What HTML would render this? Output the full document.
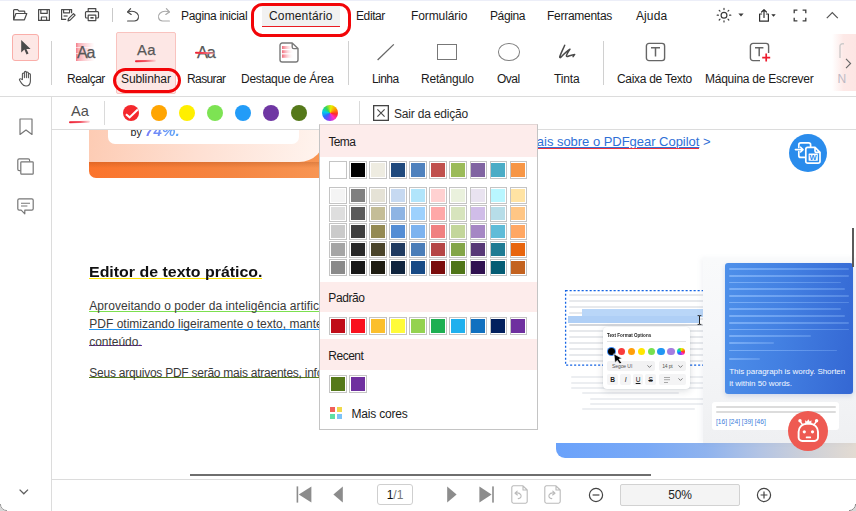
<!DOCTYPE html>
<html><head><meta charset="utf-8"><title>PDFgear</title>
<style>
*{box-sizing:border-box;margin:0;padding:0}
html,body{width:856px;height:511px;overflow:hidden;background:#fff}
body{font-family:"Liberation Sans",sans-serif;font-size:12px;color:#1b1b1b;position:relative}
.a{position:absolute}
.t{position:absolute;white-space:nowrap;line-height:14px;height:14px}
.m{top:9px}
.l{top:72px}
svg{position:absolute;overflow:visible}
.sw{position:absolute;border:1px solid #c4c4c4;background:#fff;padding:.8px}
.sw i{display:block;width:100%;height:100%}
.s2{height:16px}
.gl{position:absolute;height:2px;border-radius:1px;background:#e7e9ec}
.bl{position:absolute;height:1.7px;border-radius:1px;background:linear-gradient(90deg,rgba(150,195,255,.62),rgba(140,185,250,.34))}
.doc{position:absolute;white-space:nowrap;color:#3a3a3a;font-size:12px;line-height:14px}
</style></head><body>
<!-- ===== document area ===== -->
<div id="doc" class="a" style="left:52px;top:129px;width:804px;height:350px;overflow:hidden;background:#fff">
<div class="a" style="left:37.2px;top:-9.0px;width:260px;height:58px;border-radius:0 0 0 7px;background:linear-gradient(90deg,#fb742c 0%,#f58642 55%,#f99a58 100%)"></div>
<div class="a" style="left:37.2px;top:33.0px;width:260px;height:6px;background:linear-gradient(180deg,rgba(160,70,20,.28),rgba(160,70,20,0))"></div>
<div class="a" style="left:37.2px;top:-9.0px;width:236px;height:42.3px;border-radius:0 0 26px 0;background:linear-gradient(100deg,#fdcbb3 0%,#fee0d3 48%,#fff5f0 100%)"></div>
<div class="a" style="left:55.8px;top:-9.0px;width:191.5px;height:24.3px;border-radius:0 0 7px 7px;background:#fff"></div>
<span class="t" style="left:78.5px;top:-3px;font-size:10.6px;line-height:13px;color:#222">by</span>
<span class="t" style="left:93.0px;top:-6.6px;font-size:15.2px;line-height:18px;height:18px;font-weight:700;font-style:italic;background:linear-gradient(90deg,#7c7cf8,#5aa9f8);-webkit-background-clip:text;background-clip:text;color:transparent">74%.</span>
<span class="t" style="right:145.5px;top:4.7px;font-size:13px;line-height:15px;height:15px;color:#2f6fd6;letter-spacing:-.03px"><span style="text-decoration:underline;text-decoration-thickness:1px;text-underline-offset:1px">Saiba mais sobre o PDFgear Copilot</span> &gt;</span>
<div class="a" style="left:430px;top:18.7px;width:217.3px;height:1.3px;background:#ee2f3a"></div>
<svg style="left:737.0px;top:5.0px" width="38" height="38" viewBox="0 0 38 38"><circle cx="19" cy="19" r="19" fill="#2a8cec"/><g fill="none" stroke="#fff" stroke-width="1.7" stroke-linecap="round" stroke-linejoin="round"><path d="M9.8 13.4v-2.6a2 2 0 0 1 2-2h7.8a2 2 0 0 1 2 2v1.6M9.8 17.6v3.8a2 2 0 0 0 2 2h3.6"/><path d="M6.4 15.6h7.4M11.6 13.2l2.4 2.4-2.4 2.4" stroke-width="1.6"/><path d="M18.6 13.4h7.4l5 5v9a1.8 1.8 0 0 1-1.8 1.8H18.6a1.8 1.8 0 0 1-1.8-1.8V15.2a1.8 1.8 0 0 1 1.8-1.8zM26 13.6v3.4a1.4 1.4 0 0 0 1.4 1.4h3.4"/></g><rect x="19.6" y="19.4" width="9.2" height="7.4" rx=".6" fill="#fff"/><text x="24.2" y="25.9" font-family="Liberation Sans, sans-serif" font-size="7.6" font-weight="700" fill="#2a8cec" text-anchor="middle">W</text></svg>
<span class="t" style="left:37.3px;top:134.5px;font-size:14px;line-height:16px;height:15.4px;font-weight:700;color:#111;transform:scaleX(1.138);transform-origin:0 0;border-bottom:1.6px solid #ffe500">Editor de texto prático.</span>
<span class="doc" style="left:37.3px;top:170.2px;letter-spacing:0.065px;height:12.6px;border-bottom:1.4px solid #7ce04f">Aproveitando o poder da inteligência artificial, edite seus arquivos</span>
<span class="doc" style="left:37.3px;top:188.4px;letter-spacing:0px;height:12.7px;border-bottom:1.4px solid #2196f3">PDF otimizando ligeiramente o texto, mantendo o significado do</span>
<span class="doc" style="left:37.3px;top:205.7px;letter-spacing:-0.05px;height:11.5px;border-bottom:1.4px solid #7030a0">conteúdo.</span>
<span class="doc" style="left:37.3px;top:236.8px;letter-spacing:-0.25px;height:12.1px;border-bottom:1.4px solid #55791a">Seus arquivos PDF serão mais atraentes, informativos e profissionais.</span>
<div class="a" style="left:504.0px;top:307.0px;width:300px;height:22px;border-radius:0 0 0 9px;background:linear-gradient(90deg,#6aa2fb 0%,#79a9f6 30%,#8fb3ee 50%,#b3c4e4 68%,#cbcfd9 82%,#e3dbd2 100%)"></div>
<div class="a" style="left:504.0px;top:301.0px;width:150px;height:13px;background:#fff"></div>
<svg style="left:513.0px;top:161.0px" width="150" height="76" viewBox="0 0 150 76"><rect x=".6" y=".6" width="160" height="74.6" fill="none" stroke="#1363e4" stroke-width="1.3" stroke-dasharray="2.1 1.9"/></svg>
<div class="gl" style="left:517.0px;top:164.8px;width:136px;background:#e7e9ec"></div>
<div class="gl" style="left:517.0px;top:170.8px;width:136px;background:#e7e9ec"></div>
<div class="gl" style="left:517.0px;top:176.8px;width:136px;background:#e7e9ec"></div>
<div class="gl" style="left:517.0px;top:182.7px;width:136px;background:#e7e9ec"></div>
<div class="gl" style="left:517.0px;top:188.7px;width:136px;background:#e7e9ec"></div>
<div class="gl" style="left:517.0px;top:194.7px;width:136px;background:#d3d6db"></div>
<div class="gl" style="left:517.0px;top:200.7px;width:136px;background:#e7e9ec"></div>
<div class="gl" style="left:517.0px;top:206.7px;width:136px;background:#e7e9ec"></div>
<div class="gl" style="left:517.0px;top:212.6px;width:136px;background:#e7e9ec"></div>
<div class="gl" style="left:517.0px;top:218.6px;width:136px;background:#e7e9ec"></div>
<div class="gl" style="left:517.0px;top:224.6px;width:136px;background:#e7e9ec"></div>
<div class="gl" style="left:517.0px;top:230.6px;width:136px;background:#e7e9ec"></div>
<div class="a" style="left:530.0px;top:179.7px;width:122px;height:8px;background:#b9d6f8"></div>
<div class="a" style="left:516.0px;top:187.4px;width:131px;height:6.5px;background:#afcff6"></div>
<svg style="left:644.6px;top:186.0px" width="5" height="10" viewBox="0 0 5 10" fill="none" stroke="#222" stroke-width=".9"><path d="M.6.6h1.4a.5.5 0 0 1 .5.5v7.8a.5.5 0 0 1-.5.5H.6M4.4.6H3a.5.5 0 0 0-.5.5v7.8a.5.5 0 0 0 .5.5h1.4"/></svg>
<div class="gl" style="left:518.7px;top:247.1px;width:134.3px;background:#eceef1"></div>
<div class="gl" style="left:518.7px;top:252.6px;width:134.3px;background:#eceef1"></div>
<div class="gl" style="left:518.7px;top:257.9px;width:134.3px;background:#eceef1"></div>
<div class="gl" style="left:530.4px;top:263.2px;width:96.9px;background:#eceef1"></div>
<div class="gl" style="left:537.7px;top:268.6px;width:115.3px;background:#eceef1"></div>
<div class="gl" style="left:537.7px;top:273.8px;width:115.3px;background:#eceef1"></div>
<div class="gl" style="left:530.4px;top:279.2px;width:112.6px;background:#eceef1"></div>
<div class="a" style="left:551.2px;top:198.0px;width:86.8px;height:61.5px;border-radius:4px;background:#fff;box-shadow:0 2px 7px rgba(40,50,70,.16),0 0 1.5px rgba(40,50,70,.12)"><span class="t" style="left:4.1px;top:5.2px;font-size:5.3px;line-height:6px;height:6px;font-weight:700;color:#1c1c1c;transform:scaleX(.86);transform-origin:0 50%">Text Format Options</span><div class="a" style="left:4px;top:14px;width:79px;height:.7px;background:#e4e4e4"></div><div class="a" style="left:3.7px;top:19.9px;width:9px;height:9px;border-radius:50%;background:#3d8bf5"></div><div class="a" style="left:4.5px;top:20.8px;width:7.2px;height:7.2px;border-radius:50%;background:#000"></div><div class="a" style="left:14.6px;top:20.8px;width:7.2px;height:7.2px;border-radius:50%;background:#f93b3b"></div><div class="a" style="left:24.7px;top:20.8px;width:7.2px;height:7.2px;border-radius:50%;background:#ff9f0a"></div><div class="a" style="left:34.6px;top:20.8px;width:7.2px;height:7.2px;border-radius:50%;background:#ffe600"></div><div class="a" style="left:44.5px;top:20.8px;width:7.2px;height:7.2px;border-radius:50%;background:#76e04f"></div><div class="a" style="left:54.3px;top:20.8px;width:7.2px;height:7.2px;border-radius:50%;background:#2196f3"></div><div class="a" style="left:64.2px;top:20.8px;width:7.2px;height:7.2px;border-radius:50%;background:#a57de0"></div><div class="a" style="left:74.2px;top:20.8px;width:7.2px;height:7.2px;border-radius:50%;background:conic-gradient(from 100deg,#ff2a2a,#ff2dc8 12%,#8a3ff2 25%,#2a6cff 38%,#00cfe8 50%,#35d45a 62%,#e6f000 75%,#ff9500 88%,#ff2a2a)"></div><div class="a" style="left:4.1px;top:33.7px;width:47.4px;height:10.6px;border-radius:2px;background:#f2f2f3"></div><span class="t" style="left:8.8px;top:36px;font-size:5px;line-height:6px;height:6px;color:#555;letter-spacing:-.08px">Segoe UI</span><svg style="left:44px;top:37.6px" width="5" height="3" viewBox="0 0 5 3" fill="none" stroke="#555" stroke-width=".75"><path d="M.5.4l2 2 2-2"/></svg><div class="a" style="left:56px;top:33.7px;width:26.4px;height:10.6px;border-radius:2px;background:#f2f2f3"></div><span class="t" style="left:59px;top:36px;font-size:5px;line-height:6px;height:6px;color:#555;letter-spacing:-.15px">14 pt</span><svg style="left:75px;top:37.6px" width="5" height="3" viewBox="0 0 5 3" fill="none" stroke="#555" stroke-width=".75"><path d="M.5.4l2 2 2-2"/></svg><div class="a" style="left:4.1px;top:47.2px;width:10.6px;height:10.8px;border-radius:2px;background:#f4f4f5"></div><span class="t" style="left:4.1px;top:49.6px;width:10.6px;text-align:center;font-size:6.6px;line-height:7px;height:7px;margin-top:-.7px;color:#1a1a1a;font-weight:700">B</span><div class="a" style="left:17.3px;top:47.2px;width:10.6px;height:10.8px;border-radius:2px;background:#f4f4f5"></div><span class="t" style="left:17.3px;top:49.6px;width:10.6px;text-align:center;font-size:6.6px;line-height:7px;height:7px;margin-top:-.7px;color:#1a1a1a;font-style:italic">I</span><div class="a" style="left:29.6px;top:47.2px;width:10.6px;height:10.8px;border-radius:2px;background:#f4f4f5"></div><span class="t" style="left:29.6px;top:49.6px;width:10.6px;text-align:center;font-size:6.6px;line-height:7px;height:7px;margin-top:-.7px;color:#1a1a1a;text-decoration:underline">U</span><div class="a" style="left:42.1px;top:47.2px;width:10.6px;height:10.8px;border-radius:2px;background:#f4f4f5"></div><span class="t" style="left:42.1px;top:49.6px;width:10.6px;text-align:center;font-size:6.6px;line-height:7px;height:7px;margin-top:-.7px;color:#1a1a1a;text-decoration:line-through">S</span><div class="a" style="left:56px;top:47.2px;width:26.4px;height:10.8px;border-radius:2px;background:#f4f4f5"></div><div class="a" style="left:60.8px;top:50.3px;width:5.8px;height:.9px;background:#a8a8a8;box-shadow:0 2.2px 0 #a8a8a8"></div><div class="a" style="left:60.8px;top:54.7px;width:4.2px;height:.9px;background:#a8a8a8"></div><svg style="left:75px;top:51.2px" width="5" height="3" viewBox="0 0 5 3" fill="none" stroke="#555" stroke-width=".75"><path d="M.5.4l2 2 2-2"/></svg></div>
<svg style="left:561.0px;top:224.0px" width="11" height="12" viewBox="0 0 11 12"><path d="M.8.8l1.2 9 2.2-2.4 2.6 3.6 1.8-1.3-2.6-3.5 3.2-.6z" fill="#000" stroke="#fff" stroke-width=".7" stroke-linejoin="round"/></svg>
<div class="a" style="left:651.3px;top:129.2px;width:153px;height:184.6px;background:linear-gradient(180deg,#f9fafb 0%,#f6f7f9 40%,#eff0f2 100%);box-shadow:-2px 0 5px rgba(120,130,150,.09)"></div>
<div class="a" style="left:673.4px;top:134.2px;width:127.6px;height:130.6px;border-radius:3px;background:linear-gradient(97deg,#4e90ea 0%,#4380e2 45%,#3467d3 100%);box-shadow:0 2px 5px rgba(50,90,180,.18)"></div>
<div class="bl" style="left:677.3px;top:139.4px;width:119.3px"></div>
<div class="bl" style="left:677.3px;top:146.1px;width:119.3px"></div>
<div class="bl" style="left:677.3px;top:152.8px;width:111.5px"></div>
<div class="bl" style="left:677.3px;top:159.4px;width:115.7px"></div>
<div class="bl" style="left:677.3px;top:166.1px;width:119.3px"></div>
<div class="bl" style="left:677.3px;top:172.8px;width:119.3px"></div>
<div class="bl" style="left:677.3px;top:179.4px;width:111.5px"></div>
<div class="bl" style="left:677.3px;top:186.1px;width:115.7px"></div>
<div class="bl" style="left:677.3px;top:192.9px;width:119.3px"></div>
<div class="bl" style="left:677.3px;top:199.5px;width:119.3px"></div>
<div class="bl" style="left:677.3px;top:206.2px;width:81.7px"></div>
<div class="bl" style="left:677.3px;top:213.0px;width:45.1px"></div>
<div class="bl" style="left:677.3px;top:220.8px;width:107.7px"></div>
<div class="bl" style="left:677.3px;top:229.0px;width:30.7px"></div>
<span class="t" style="left:677.2px;top:237.3px;font-size:8px;line-height:11.9px;height:24px;color:#f4f8ff;white-space:pre;letter-spacing:-.04px">This paragraph is wordy. Shorten
it within 50 words.</span>
<div class="a" style="left:660.0px;top:273.0px;width:127.2px;height:28.2px;border-radius:3px;background:#fff"></div>
<div class="gl" style="left:664.0px;top:276.8px;width:120px;background:#dcdcdc"></div>
<div class="gl" style="left:664.0px;top:282.0px;width:120px;background:#dcdcdc"></div>
<span class="t" style="left:664.0px;top:288.6px;font-size:6.65px;line-height:8px;height:8px;color:#3b7ddb">[16] [24] [39] [46]</span>
<svg style="left:736.0px;top:282.2px" width="40" height="40" viewBox="0 0 40 40"><circle cx="20" cy="20" r="20" fill="#ee5a52"/><g fill="none" stroke="#fff" stroke-width="1.9" stroke-linecap="round" stroke-linejoin="round"><path d="M10.6 26.4v-5.6a8 8 0 0 1 8-8h3.4a8 8 0 0 1 8 8v5.6a3.6 3.6 0 0 1-3.6 3.6H14.2a3.6 3.6 0 0 1-3.6-3.6z"/><path d="M12.4 10.6l2.2 3.2M28.2 10.6L26 13.8" stroke-width="1.5"/></g><circle cx="12" cy="9.8" r="1.7" fill="#fff"/><circle cx="28.6" cy="9.8" r="1.7" fill="#fff"/><path d="M17.2 12.6V9.2l1.7 1.3 1.4-2.3 1.4 2.3 1.7-1.3v3.4z" fill="#fff"/><circle cx="16.3" cy="20.8" r="1.6" fill="#fff"/><circle cx="24.5" cy="20.8" r="1.6" fill="#fff"/><rect x="17.8" y="25.6" width="5.2" height="1.7" rx=".5" fill="#fff"/></svg>
<div class="a" style="left:799.8px;top:99.0px;width:2.6px;height:39px;background:#5a5a5a"></div>
<div class="a" style="left:138.0px;top:344.6px;width:461px;height:2.2px;background:#6e6e6e"></div>
</div>
<!-- ===== top menu ===== -->
<div id="menu" class="a" style="left:0;top:0;width:856px;height:32px;background:#fff">
<div class="a" style="left:0;top:0;width:856px;height:1px;background:#eceef8"></div>
<!-- folder -->
<svg style="left:12px;top:8px" width="16" height="14" viewBox="0 0 16 14" fill="none" stroke="#4a4a4a" stroke-width="1.2" stroke-linejoin="round"><path d="M1.6 11.6V2.4a.8.8 0 0 1 .8-.8h3.2l1.4 1.6h5a.8.8 0 0 1 .8.8v1.4"/><path d="M1.6 11.8l2.3-6.3h10.9l-2.4 6.3z"/></svg>
<!-- save -->
<svg style="left:37px;top:8px" width="14" height="14" viewBox="0 0 14 14" fill="none" stroke="#4a4a4a" stroke-width="1.2" stroke-linejoin="round"><path d="M1.6 1.6h10.8v10.8H1.6z"/><path d="M3.8 1.8v3.6h6.4V1.8"/><path d="M4.4 12.2V9h5.2v3.2"/></svg>
<!-- save as -->
<svg style="left:60px;top:8px" width="16" height="14" viewBox="0 0 16 14" fill="none" stroke="#4a4a4a" stroke-width="1.2" stroke-linejoin="round"><path d="M11.6 5.2V1.6H1.6v9.8h4.6"/><path d="M3.6 1.8v3h6V1.8"/><path d="M3.6 8h4"/><path d="M8 12.8l.5-2.2 5-5 1.6 1.6-5 5z"/></svg>
<!-- print -->
<svg style="left:84px;top:7px" width="16" height="15" viewBox="0 0 16 15" fill="none" stroke="#4a4a4a" stroke-width="1.2" stroke-linejoin="round"><path d="M4.2 4.6V1.6h7.6v3"/><path d="M4.2 11H2.4a.9.9 0 0 1-.9-.9V5.6a.9.9 0 0 1 .9-.9h11.2a.9.9 0 0 1 .9.9v4.5a.9.9 0 0 1-.9.9h-1.8"/><path d="M4.2 8.2h7.6v5.4H4.2z"/><path d="M6.4 10.8h3.2" stroke-width="1.6"/></svg>
<div class="a" style="left:112px;top:8px;width:1px;height:14px;background:#c9c9c9"></div>
<!-- undo -->
<svg style="left:126px;top:7px" width="15" height="16" viewBox="0 0 15 16" fill="none" stroke="#4a4a4a" stroke-width="1.2" stroke-linecap="round" stroke-linejoin="round"><path d="M4.6 1.6L1.6 5l3.6 2.4"/><path d="M1.8 5c3-1 6.6-1.2 9.2 1.2 2.8 2.8 1.6 7.6-2.6 7.8H1.6"/></svg>
<!-- redo -->
<svg style="left:156px;top:7px" width="15" height="16" viewBox="0 0 15 16" fill="none" stroke="#a9a9a9" stroke-width="1.2" stroke-linecap="round" stroke-linejoin="round"><g transform="translate(15 0) scale(-1 1)"><path d="M4.6 1.6L1.6 5l3.6 2.4"/><path d="M1.8 5c3-1 6.6-1.2 9.2 1.2 2.8 2.8 1.6 7.6-2.6 7.8H1.6"/></g></svg>
<span class="t m" style="left:181px;letter-spacing:-.32px">Pagina inicial</span>
<div class="a" style="left:262px;top:6px;width:78px;height:20.8px;background:#f1f1f1;border-bottom:1.8px solid #ea1c22"></div>
<span class="t m" style="left:269px;letter-spacing:.15px">Comentário</span>
<span class="t m" style="left:356px;letter-spacing:-.4px">Editar</span>
<span class="t m" style="left:411px;letter-spacing:-.1px">Formulário</span>
<span class="t m" style="left:490px;letter-spacing:-.4px">Página</span>
<span class="t m" style="left:547px;letter-spacing:-.27px">Ferramentas</span>
<span class="t m" style="left:636px;letter-spacing:.1px">Ajuda</span>
<!-- sun -->
<svg style="left:716px;top:7px" width="16" height="16" viewBox="0 0 16 16" fill="none" stroke="#3c3c3c" stroke-width="1.2" stroke-linecap="round"><circle cx="8" cy="8.2" r="2.9"/><path d="M8 1.4v1.2M8 13.8V15M1.2 8.2h1.2M13.6 8.2h1.2M3.2 3.4l.8.8M12 12.2l.8.8M12.8 3.4l-.8.8M4 12.2l-.8.8"/></svg>
<svg style="left:738px;top:13px" width="6" height="4" viewBox="0 0 6 4"><path d="M.4.4h5.2L3 3.4z" fill="#3c3c3c"/></svg>
<!-- share -->
<svg style="left:758px;top:8px" width="12" height="15" viewBox="0 0 12 15" fill="none" stroke="#2e2e2e" stroke-width="1.2" stroke-linecap="round" stroke-linejoin="round"><path d="M3.6 6H1.6v7.2h8.8V6H8.4"/><path d="M6 9.4V1.8M3.6 4L6 1.6 8.4 4"/></svg>
<svg style="left:771px;top:14px" width="5" height="3" viewBox="0 0 5 3"><path d="M.3.3h4.4L2.5 2.8z" fill="#2e2e2e"/></svg>
<!-- fullscreen -->
<svg style="left:793px;top:9px" width="14" height="13" viewBox="0 0 14 13" fill="none" stroke="#3c3c3c" stroke-width="1.3"><path d="M1.2 4.2V1.2h3.2M9.6 1.2h3.2v3M12.8 8.8v3H9.6M4.4 11.8H1.2v-3"/></svg>
<!-- chevron up -->
<svg style="left:826px;top:11px" width="13" height="8" viewBox="0 0 13 8" fill="none" stroke="#555" stroke-width="1.2"><path d="M.8 7.2L6.3 1.6l5.5 5.6"/></svg>
</div>
<!-- ===== toolbar ===== -->
<div id="tool" class="a" style="left:0;top:32px;width:856px;height:65px;background:#fff;border-bottom:1px solid #dcdcdc">
<!-- select -->
<div class="a" style="left:12px;top:2px;width:27px;height:27px;background:#fde7e5;border:1px solid #faaea9;border-radius:3px"></div>
<svg style="left:20px;top:7px" width="12" height="17" viewBox="0 0 12 17"><path d="M1.2 1v12.4l3.2-2.8 2.1 4.9 2-.9-2.1-4.7h4.2z" fill="#4a4a4a"/></svg>
<!-- hand -->
<svg style="left:18px;top:38px" width="16" height="17" viewBox="0 0 16 17" fill="none" stroke="#555" stroke-width="1.1" stroke-linecap="round" stroke-linejoin="round"><path d="M4.4 9.6V4a1 1 0 0 1 2 0v3.6V2.4a1 1 0 0 1 2 0v5.2V3a1 1 0 0 1 2 0v4.8V4.6a1 1 0 0 1 2 0v6.4c0 3-1.6 5-4.4 5-2.2 0-3.2-.8-4.4-2.6L1.6 10.2c-.6-1 .6-2 1.5-1.1z"/></svg>
<div class="a" style="left:51px;top:9px;width:1px;height:44px;background:#d0d0d0"></div>
<!-- realcar -->
<div class="a" style="left:76px;top:11px;width:20px;height:18px;background:linear-gradient(90deg,#f47c88 0%,rgba(247,150,160,.8) 12%,rgba(250,175,182,.6) 40%,rgba(255,255,255,0) 92%)"></div>
<div class="a" style="left:76px;top:15.2px;width:20px;height:1px;background:rgba(255,255,255,.6)"></div>
<div class="a" style="left:76px;top:20.6px;width:20px;height:1px;background:rgba(255,255,255,.6)"></div>
<span class="t" style="left:77px;top:11px;-webkit-text-stroke:.25px #575757;font-size:16px;line-height:20px;height:20px;color:#575757;letter-spacing:-1.1px">Aa</span>
<span class="t l2" style="left:67px;top:40px;letter-spacing:-.5px">Realçar</span>
<!-- sublinhar -->
<div class="a" style="left:116px;top:0;width:60px;height:62px;background:#fde7e5;border:1px solid #f9c3bf;border-radius:2px"></div>
<span class="t" style="left:137px;top:8px;-webkit-text-stroke:.25px #575757;font-size:14.8px;line-height:20px;height:20px;color:#575757;letter-spacing:.3px">Aa</span>
<div class="a" style="left:135px;top:28.2px;width:20.5px;height:1.9px;border-radius:1px;background:linear-gradient(90deg,#ee1c2e 0%,#f15a68 50%,rgba(250,180,185,.35) 100%);transform:rotate(-1.5deg)"></div>
<span class="t" style="left:121px;top:40px;letter-spacing:-.1px">Sublinhar</span>
<!-- rasurar -->
<span class="t" style="left:197px;top:10px;-webkit-text-stroke:.25px #575757;font-size:16.3px;line-height:20px;height:20px;color:#575757;letter-spacing:-1px">Aa</span>
<div class="a" style="left:195px;top:19.6px;width:20px;height:1.5px;border-radius:1px;background:linear-gradient(90deg,#ee1c2e 0%,#f2596a 55%,rgba(250,180,185,.5) 100%);transform:rotate(1.2deg)"></div>
<span class="t" style="left:187px;top:40px;letter-spacing:-.6px">Rasurar</span>
<!-- destaque -->
<svg style="left:279px;top:10px" width="20" height="21" viewBox="0 0 20 21"><defs><linearGradient id="gd" x1="0" x2="1"><stop offset="0" stop-color="#f26b7b"/><stop offset="1" stop-color="#fff" stop-opacity="0"/></linearGradient></defs><rect x="3" y="4" width="12" height="3" fill="url(#gd)"/><rect x="3" y="8.2" width="12" height="3" fill="url(#gd)"/><rect x="3" y="12.4" width="12" height="3.4" fill="url(#gd)"/><path d="M13.2 1H3.2A2.2 2.2 0 0 0 1 3.2v14.6A2.2 2.2 0 0 0 3.2 20h13.6a2.2 2.2 0 0 0 2.2-2.2V6.6zM13.2 1v4a1.6 1.6 0 0 0 1.6 1.6H19" fill="none" stroke="#7a7a7a" stroke-width="1.4" stroke-linejoin="round"/></svg>
<span class="t" style="left:241px;top:40px;letter-spacing:-.26px">Destaque de Área</span>
<div class="a" style="left:348px;top:9px;width:1px;height:44px;background:#d0d0d0"></div>
<!-- linha -->
<svg style="left:376px;top:11px" width="19" height="18" viewBox="0 0 19 18"><path d="M1.6 17L17.8 1.4" stroke="#666" stroke-width="1.3" fill="none"/></svg>
<span class="t" style="left:372px;top:40px;letter-spacing:-.55px">Linha</span>
<!-- retangulo -->
<div class="a" style="left:436.5px;top:11.5px;width:20px;height:16.5px;border:1.3px solid #777"></div>
<span class="t" style="left:421px;top:40px;letter-spacing:-.22px">Retângulo</span>
<!-- oval -->
<div class="a" style="left:498px;top:11px;width:21.5px;height:17.5px;border:1.3px solid #808080;border-radius:50%"></div>
<span class="t" style="left:497px;top:40px;letter-spacing:-.5px">Oval</span>
<!-- tinta -->
<svg style="left:558px;top:12px" width="18" height="15" viewBox="0 0 18 15" fill="none" stroke="#4a4a4a" stroke-width="1.5" stroke-linecap="round" stroke-linejoin="round"><path d="M6.7 1.2C5 5.2 2.5 10 1.7 13c0 .8.6.8 1.2.2C6 10 9 7 12 5.2 10.4 7.6 8.6 10.2 8.4 11.8c0 .9 1 .8 2 .4 2.6-1 4.6-1.8 6.3-1.8l-1.6 2.2"/></svg>
<span class="t" style="left:554px;top:40px;letter-spacing:-.15px">Tinta</span>
<div class="a" style="left:603px;top:9px;width:1px;height:44px;background:#d0d0d0"></div>
<!-- caixa de texto -->
<svg style="left:645px;top:10px" width="21" height="20" viewBox="0 0 21 20" fill="none" stroke="#666" stroke-width="1.4"><rect x="1.4" y="1.4" width="18.2" height="17.2" rx="2.6"/><path d="M6 5.8h9M10.5 5.8v8.8" stroke-width="1.5"/></svg>
<span class="t" style="left:617px;top:40px;letter-spacing:-.3px">Caixa de Texto</span>
<!-- maquina -->
<svg style="left:749px;top:10px" width="23" height="21" viewBox="0 0 23 21" fill="none" stroke="#666" stroke-width="1.4"><path d="M11 18.6H4a2.6 2.6 0 0 1-2.6-2.6V4A2.6 2.6 0 0 1 4 1.4h13A2.6 2.6 0 0 1 19.6 4v7"/><path d="M6 5.8h8.4M10.2 5.8v8.4" stroke-width="1.5"/><path d="M17.2 11.6v8M13.2 15.6h8" stroke="#ee1c2e" stroke-width="1.7"/></svg>
<span class="t" style="left:705px;top:40px;letter-spacing:-.26px">Máquina de Escrever</span>
<!-- overflow -->
<div class="a" style="left:832px;top:2px;width:24px;height:57px;background:linear-gradient(90deg,rgba(253,231,229,0) 0%,#fde9e7 48%,#fde6e4 100%)"></div>
<svg style="left:839px;top:10.5px" width="6" height="16" viewBox="0 0 6 16" fill="none" stroke="#cfcccc" stroke-width="1.5"><path d="M5 .8H3.4A2.4 2.4 0 0 0 1 3.2V15"/></svg>
<span class="t" style="left:837.5px;top:40px;color:#bdb9c4">N</span>
<svg style="left:845px;top:25.5px" width="7" height="11" viewBox="0 0 7 11" fill="none" stroke="#666" stroke-width="1.1"><path d="M1 .8l4.6 4.7L1 10.2"/></svg>
</div>
<!-- ===== sub toolbar ===== -->
<div id="sub" class="a" style="left:52px;top:97px;width:804px;height:33px;background:#fff;border-bottom:1px solid #dcdcdc">
<span class="t" style="left:19px;top:4px;font-size:14.6px;line-height:20px;height:20px;color:#4f4f4f;letter-spacing:.1px">Aa</span>
<div class="a" style="left:17px;top:24.3px;width:20.5px;height:1.7px;border-radius:1px;background:linear-gradient(90deg,#ee1c2e 0%,#f25a6a 55%,rgba(250,190,195,.5) 100%);transform:rotate(-2deg)"></div>
<div class="a" style="left:52px;top:4px;width:1px;height:24px;background:#dadada"></div>
<div class="a" style="left:71px;top:8px;width:16px;height:16px;border-radius:50%;background:#f4282d"></div>
<div class="a" style="left:99px;top:8px;width:16px;height:16px;border-radius:50%;background:#ffa502"></div>
<div class="a" style="left:127px;top:8px;width:16px;height:16px;border-radius:50%;background:#ffef00"></div>
<div class="a" style="left:155px;top:8px;width:16px;height:16px;border-radius:50%;background:#7de353"></div>
<div class="a" style="left:183px;top:8px;width:16px;height:16px;border-radius:50%;background:#229cf8"></div>
<div class="a" style="left:211px;top:8px;width:16px;height:16px;border-radius:50%;background:#6f37a3"></div>
<div class="a" style="left:239px;top:8px;width:16px;height:16px;border-radius:50%;background:#55791a"></div>
<svg style="left:73px;top:11px" width="14" height="11" viewBox="0 0 14 11" fill="none" stroke="#fff" stroke-width="2.1" stroke-linejoin="miter"><path d="M1 6.2l3.6 3.2 8.2-7.8"/></svg>
<div class="a" style="left:270px;top:8px;width:16px;height:16px;border-radius:50%;background:conic-gradient(from 100deg,#ff2a2a,#ff2dc8 12%,#8a3ff2 25%,#2a6cff 38%,#00cfe8 50%,#35d45a 62%,#e6f000 75%,#ff9500 88%,#ff2a2a)"></div>
<div class="a" style="left:307px;top:4px;width:1px;height:24px;background:#dadada"></div>
<svg style="left:321px;top:8px" width="16" height="16" viewBox="0 0 16 16" fill="none"><rect x=".65" y=".65" width="14.7" height="14.7" stroke="#444" stroke-width="1.3"/><path d="M4.4 4.4l7.2 7.2M11.6 4.4l-7.2 7.2" stroke="#4a4a4a" stroke-width="1.15"/></svg>
<span class="t" style="left:342px;top:10px;letter-spacing:-.2px;color:#2b2b2b">Sair da edição</span>
</div>
<!-- ===== sidebar ===== -->
<div id="side" class="a" style="left:0;top:97px;width:52px;height:414px;background:#fff;border-right:1px solid #dcdcdc">
<svg style="left:19px;top:21px" width="14" height="18" viewBox="0 0 14 18" fill="none" stroke="#777" stroke-width="1.2" stroke-linejoin="round"><path d="M1 1h12v15.4L7 12 1 16.4z"/></svg>
<svg style="left:17px;top:61px" width="17" height="17" viewBox="0 0 17 17" fill="none" stroke="#777" stroke-width="1.2"><path d="M3.6 12.6H2.2A1.4 1.4 0 0 1 .8 11.2V2.2A1.4 1.4 0 0 1 2.2.8h9a1.4 1.4 0 0 1 1.4 1.4v1.4"/><rect x="3.8" y="3.8" width="12.4" height="12.4" rx=".8"/></svg>
<svg style="left:17px;top:101px" width="17" height="17" viewBox="0 0 17 17" fill="none" stroke="#777" stroke-width="1.2" stroke-linejoin="round"><path d="M.8 2.2A1.4 1.4 0 0 1 2.2.8h12.6a1.4 1.4 0 0 1 1.4 1.4v8.6a1.4 1.4 0 0 1-1.4 1.4H7.8v3.6L4.2 12.2h-2A1.4 1.4 0 0 1 .8 10.8z"/><path d="M4 5.2h9M4 8h6.4" stroke-width="1.1"/></svg>
<svg style="left:19.2px;top:391.8px" width="10" height="6" viewBox="0 0 10 6" fill="none" stroke="#5e5e5e" stroke-width="1.3"><path d="M.6.6L4.8 4.8 9 .6"/></svg>
</div>
<!-- ===== bottom bar ===== -->
<div id="bot" class="a" style="left:52px;top:479px;width:804px;height:32px;background:#fff;box-shadow:inset 0 1px 0 #dcdcdc">
<svg style="left:244px;top:7px" width="16" height="17" viewBox="0 0 16 17"><rect x=".6" y=".4" width="1.6" height="16.2" fill="#8c8c8c"/><path d="M15.4.4v16.2L2.8 8.5z" fill="#8c8c8c"/></svg>
<svg style="left:281px;top:7px" width="10" height="17" viewBox="0 0 10 17"><path d="M9.8.4v16.2L.4 8.5z" fill="#8c8c8c"/></svg>
<div class="a" style="left:325px;top:5px;width:36px;height:21px;border:1px solid #cfcfcf;border-radius:3px;background:#fff"></div>
<span class="t" style="left:325px;top:9px;width:36px;text-align:center;color:#222"><b style="font-weight:400;color:#111">1</b><span style="color:#777">/1</span></span>
<svg style="left:395px;top:7px" width="10" height="17" viewBox="0 0 10 17"><path d="M.2.4v16.2L9.6 8.5z" fill="#8c8c8c"/></svg>
<svg style="left:427px;top:7px" width="16" height="17" viewBox="0 0 16 17"><rect x="13.2" y=".4" width="1.6" height="16.2" fill="#8c8c8c"/><path d="M.4.4v16.2L12.6 8.5z" fill="#8c8c8c"/></svg>
<svg style="left:459px;top:6px" width="17" height="19" viewBox="0 0 17 19" fill="none" stroke="#bababa" stroke-width="1.1" stroke-linejoin="round"><path d="M12 .8H2.4A1.6 1.6 0 0 0 .8 2.4v14.2a1.6 1.6 0 0 0 1.6 1.6h12.2a1.6 1.6 0 0 0 1.6-1.6V5zM12 .8V5h4.2"/><path d="M6.2 6.2L4 8.2l2.4 1.8M4.2 8.2c2.2-.6 4.6-.2 5.6 1.6.9 1.8-.2 3.8-2.6 3.8" stroke-linecap="round"/></svg>
<svg style="left:492px;top:6px" width="17" height="19" viewBox="0 0 17 19" fill="none" stroke="#bababa" stroke-width="1.1" stroke-linejoin="round"><path d="M12 .8H2.4A1.6 1.6 0 0 0 .8 2.4v14.2a1.6 1.6 0 0 0 1.6 1.6h12.2a1.6 1.6 0 0 0 1.6-1.6V5zM12 .8V5h4.2"/><g transform="translate(15 0) scale(-1 1)"><path d="M6.2 6.2L4 8.2l2.4 1.8M4.2 8.2c2.2-.6 4.6-.2 5.6 1.6.9 1.8-.2 3.8-2.6 3.8" stroke-linecap="round"/></g></svg>
<svg style="left:536px;top:8px" width="16" height="16" viewBox="0 0 16 16" fill="none" stroke="#444" stroke-width="1.2"><circle cx="8" cy="8" r="6.6"/><path d="M4.6 8h6.8"/></svg>
<div class="a" style="left:568px;top:5px;width:120px;height:22px;border:1px solid #d2d2d2;border-radius:2px;background:#f4f4f4"></div>
<span class="t" style="left:568px;top:9px;width:120px;text-align:center;color:#222;letter-spacing:-.2px">50%</span>
<svg style="left:704px;top:8px" width="16" height="16" viewBox="0 0 16 16" fill="none" stroke="#444" stroke-width="1.2"><circle cx="8" cy="8" r="6.6"/><path d="M4.6 8h6.8M8 4.6v6.8"/></svg>
</div>
<!-- ===== popup ===== -->
<div id="pop" class="a" style="left:319px;top:124px;width:219px;height:306px;background:#fff;border:1px solid #c4c4c4;border-top-color:#e3d6d5">
<div class="a" style="left:0;top:0;width:217px;height:31.6px;background:#fdeceb"></div>
<span class="t" style="left:8.4px;top:9.5px;letter-spacing:-.6px">Tema</span>
<div class="sw" style="left:9.30px;top:36.40px;width:17.3px;height:17.3px"><i style="background:#ffffff"></i></div>
<div class="sw" style="left:29.33px;top:36.40px;width:17.3px;height:17.3px"><i style="background:#000000"></i></div>
<div class="sw" style="left:49.36px;top:36.40px;width:17.3px;height:17.3px"><i style="background:#eeece1"></i></div>
<div class="sw" style="left:69.39px;top:36.40px;width:17.3px;height:17.3px"><i style="background:#1f497d"></i></div>
<div class="sw" style="left:89.42px;top:36.40px;width:17.3px;height:17.3px"><i style="background:#4f81bd"></i></div>
<div class="sw" style="left:109.45px;top:36.40px;width:17.3px;height:17.3px"><i style="background:#c0504d"></i></div>
<div class="sw" style="left:129.48px;top:36.40px;width:17.3px;height:17.3px"><i style="background:#9bbb59"></i></div>
<div class="sw" style="left:149.51px;top:36.40px;width:17.3px;height:17.3px"><i style="background:#8064a2"></i></div>
<div class="sw" style="left:169.54px;top:36.40px;width:17.3px;height:17.3px"><i style="background:#4bacc6"></i></div>
<div class="sw" style="left:189.57px;top:36.40px;width:17.3px;height:17.3px"><i style="background:#f79646"></i></div>
<div class="sw" style="left:9.30px;top:62.20px;width:17.3px;height:16.8px"><i style="background:#f4f4f4"></i></div>
<div class="sw" style="left:9.30px;top:80.25px;width:17.3px;height:16.8px"><i style="background:#dedede"></i></div>
<div class="sw" style="left:9.30px;top:98.30px;width:17.3px;height:16.8px"><i style="background:#cacaca"></i></div>
<div class="sw" style="left:9.30px;top:116.35px;width:17.3px;height:16.8px"><i style="background:#a5a5a5"></i></div>
<div class="sw" style="left:9.30px;top:134.40px;width:17.3px;height:16.8px"><i style="background:#8a8a8a"></i></div>
<div class="sw" style="left:29.33px;top:62.20px;width:17.3px;height:16.8px"><i style="background:#808080"></i></div>
<div class="sw" style="left:29.33px;top:80.25px;width:17.3px;height:16.8px"><i style="background:#5a5a5a"></i></div>
<div class="sw" style="left:29.33px;top:98.30px;width:17.3px;height:16.8px"><i style="background:#3e3e3e"></i></div>
<div class="sw" style="left:29.33px;top:116.35px;width:17.3px;height:16.8px"><i style="background:#282828"></i></div>
<div class="sw" style="left:29.33px;top:134.40px;width:17.3px;height:16.8px"><i style="background:#181818"></i></div>
<div class="sw" style="left:49.36px;top:62.20px;width:17.3px;height:16.8px"><i style="background:#e5e2d6"></i></div>
<div class="sw" style="left:49.36px;top:80.25px;width:17.3px;height:16.8px"><i style="background:#c4bd97"></i></div>
<div class="sw" style="left:49.36px;top:98.30px;width:17.3px;height:16.8px"><i style="background:#948a54"></i></div>
<div class="sw" style="left:49.36px;top:116.35px;width:17.3px;height:16.8px"><i style="background:#4a442a"></i></div>
<div class="sw" style="left:49.36px;top:134.40px;width:17.3px;height:16.8px"><i style="background:#1e1c11"></i></div>
<div class="sw" style="left:69.39px;top:62.20px;width:17.3px;height:16.8px"><i style="background:#c6d9f1"></i></div>
<div class="sw" style="left:69.39px;top:80.25px;width:17.3px;height:16.8px"><i style="background:#8eb4e3"></i></div>
<div class="sw" style="left:69.39px;top:98.30px;width:17.3px;height:16.8px"><i style="background:#548dd4"></i></div>
<div class="sw" style="left:69.39px;top:116.35px;width:17.3px;height:16.8px"><i style="background:#1f3a60"></i></div>
<div class="sw" style="left:69.39px;top:134.40px;width:17.3px;height:16.8px"><i style="background:#0f243e"></i></div>
<div class="sw" style="left:89.42px;top:62.20px;width:17.3px;height:16.8px"><i style="background:#b1e5fb"></i></div>
<div class="sw" style="left:89.42px;top:80.25px;width:17.3px;height:16.8px"><i style="background:#9dd1fd"></i></div>
<div class="sw" style="left:89.42px;top:98.30px;width:17.3px;height:16.8px"><i style="background:#7db3ef"></i></div>
<div class="sw" style="left:89.42px;top:116.35px;width:17.3px;height:16.8px"><i style="background:#4a7db8"></i></div>
<div class="sw" style="left:89.42px;top:134.40px;width:17.3px;height:16.8px"><i style="background:#174a85"></i></div>
<div class="sw" style="left:109.45px;top:62.20px;width:17.3px;height:16.8px"><i style="background:#ffd1d1"></i></div>
<div class="sw" style="left:109.45px;top:80.25px;width:17.3px;height:16.8px"><i style="background:#fea8a8"></i></div>
<div class="sw" style="left:109.45px;top:98.30px;width:17.3px;height:16.8px"><i style="background:#f08080"></i></div>
<div class="sw" style="left:109.45px;top:116.35px;width:17.3px;height:16.8px"><i style="background:#b54545"></i></div>
<div class="sw" style="left:109.45px;top:134.40px;width:17.3px;height:16.8px"><i style="background:#7a0c0c"></i></div>
<div class="sw" style="left:129.48px;top:62.20px;width:17.3px;height:16.8px"><i style="background:#eaf1dd"></i></div>
<div class="sw" style="left:129.48px;top:80.25px;width:17.3px;height:16.8px"><i style="background:#d7e4bd"></i></div>
<div class="sw" style="left:129.48px;top:98.30px;width:17.3px;height:16.8px"><i style="background:#c3d69b"></i></div>
<div class="sw" style="left:129.48px;top:116.35px;width:17.3px;height:16.8px"><i style="background:#83a548"></i></div>
<div class="sw" style="left:129.48px;top:134.40px;width:17.3px;height:16.8px"><i style="background:#4f7518"></i></div>
<div class="sw" style="left:149.51px;top:62.20px;width:17.3px;height:16.8px"><i style="background:#e9e3f0"></i></div>
<div class="sw" style="left:149.51px;top:80.25px;width:17.3px;height:16.8px"><i style="background:#d0bde8"></i></div>
<div class="sw" style="left:149.51px;top:98.30px;width:17.3px;height:16.8px"><i style="background:#a587c4"></i></div>
<div class="sw" style="left:149.51px;top:116.35px;width:17.3px;height:16.8px"><i style="background:#573876"></i></div>
<div class="sw" style="left:149.51px;top:134.40px;width:17.3px;height:16.8px"><i style="background:#2f1150"></i></div>
<div class="sw" style="left:169.54px;top:62.20px;width:17.3px;height:16.8px"><i style="background:#b9f6ff"></i></div>
<div class="sw" style="left:169.54px;top:80.25px;width:17.3px;height:16.8px"><i style="background:#b7dde8"></i></div>
<div class="sw" style="left:169.54px;top:98.30px;width:17.3px;height:16.8px"><i style="background:#60bcd8"></i></div>
<div class="sw" style="left:169.54px;top:116.35px;width:17.3px;height:16.8px"><i style="background:#1f7b93"></i></div>
<div class="sw" style="left:169.54px;top:134.40px;width:17.3px;height:16.8px"><i style="background:#045c74"></i></div>
<div class="sw" style="left:189.57px;top:62.20px;width:17.3px;height:16.8px"><i style="background:#ffe3a3"></i></div>
<div class="sw" style="left:189.57px;top:80.25px;width:17.3px;height:16.8px"><i style="background:#ffc685"></i></div>
<div class="sw" style="left:189.57px;top:98.30px;width:17.3px;height:16.8px"><i style="background:#ffa763"></i></div>
<div class="sw" style="left:189.57px;top:116.35px;width:17.3px;height:16.8px"><i style="background:#e8650e"></i></div>
<div class="sw" style="left:189.57px;top:134.40px;width:17.3px;height:16.8px"><i style="background:#c3621f"></i></div>
<div class="a" style="left:0;top:156.8px;width:217px;height:30.6px;background:#fdeceb"></div>
<span class="t" style="left:8.3px;top:165.5px;letter-spacing:-.42px">Padrão</span>
<div class="sw" style="left:9.30px;top:192.30px;width:17.3px;height:17.3px"><i style="background:#c00c18"></i></div>
<div class="sw" style="left:29.33px;top:192.30px;width:17.3px;height:17.3px"><i style="background:#f9101d"></i></div>
<div class="sw" style="left:49.36px;top:192.30px;width:17.3px;height:17.3px"><i style="background:#fbbf2c"></i></div>
<div class="sw" style="left:69.39px;top:192.30px;width:17.3px;height:17.3px"><i style="background:#fffb3a"></i></div>
<div class="sw" style="left:89.42px;top:192.30px;width:17.3px;height:17.3px"><i style="background:#94d250"></i></div>
<div class="sw" style="left:109.45px;top:192.30px;width:17.3px;height:17.3px"><i style="background:#1daf52"></i></div>
<div class="sw" style="left:129.48px;top:192.30px;width:17.3px;height:17.3px"><i style="background:#20b0ee"></i></div>
<div class="sw" style="left:149.51px;top:192.30px;width:17.3px;height:17.3px"><i style="background:#1170bf"></i></div>
<div class="sw" style="left:169.54px;top:192.30px;width:17.3px;height:17.3px"><i style="background:#02205e"></i></div>
<div class="sw" style="left:189.57px;top:192.30px;width:17.3px;height:17.3px"><i style="background:#6f309f"></i></div>
<div class="a" style="left:0;top:214.2px;width:217px;height:30.6px;background:#fdeceb"></div>
<span class="t" style="left:8.3px;top:223.5px;letter-spacing:-.5px">Recent</span>
<div class="sw" style="left:9.30px;top:250.30px;width:17.3px;height:17.3px"><i style="background:#55791a"></i></div>
<div class="sw" style="left:29.33px;top:250.30px;width:17.3px;height:17.3px"><i style="background:#6f309f"></i></div>
<div class="a" style="left:10.2px;top:282.2px;width:5px;height:5px;background:#f0605a"></div><div class="a" style="left:16.8px;top:282.2px;width:5px;height:5px;background:#f0d94a"></div><div class="a" style="left:10.2px;top:288.8px;width:5px;height:5px;background:#5fe0a5"></div><div class="a" style="left:16.8px;top:288.8px;width:5px;height:5px;background:#7cc4f8"></div>
<span class="t" style="left:31.6px;top:281.6px;letter-spacing:-.22px">Mais cores</span>
</div>
<!-- window corners -->
<svg style="left:0;top:504px" width="7" height="7" viewBox="0 0 7 7"><path d="M0 0A7 7 0 0 0 7 7H0z" fill="#d6d6d6"/><path d="M.4 0A6.6 6.6 0 0 0 7 6.6" fill="none" stroke="#9a9a9a" stroke-width="1"/></svg>
<svg style="left:849px;top:504px" width="7" height="7" viewBox="0 0 7 7"><path d="M7 0A7 7 0 0 1 0 7H7z" fill="#d6d6d6"/><path d="M6.6 0A6.6 6.6 0 0 1 0 6.6" fill="none" stroke="#8a8a8a" stroke-width="1"/></svg>
<!-- ===== annotations ===== -->
<div id="ann2" class="a" style="left:113px;top:68px;width:68px;height:24.7px;border:3.2px solid #f20508;border-radius:13px"></div>
<div id="ann1" class="a" style="left:251px;top:3px;width:100px;height:34px;border:3px solid #f20508;border-radius:11.5px"></div>
</body></html>
